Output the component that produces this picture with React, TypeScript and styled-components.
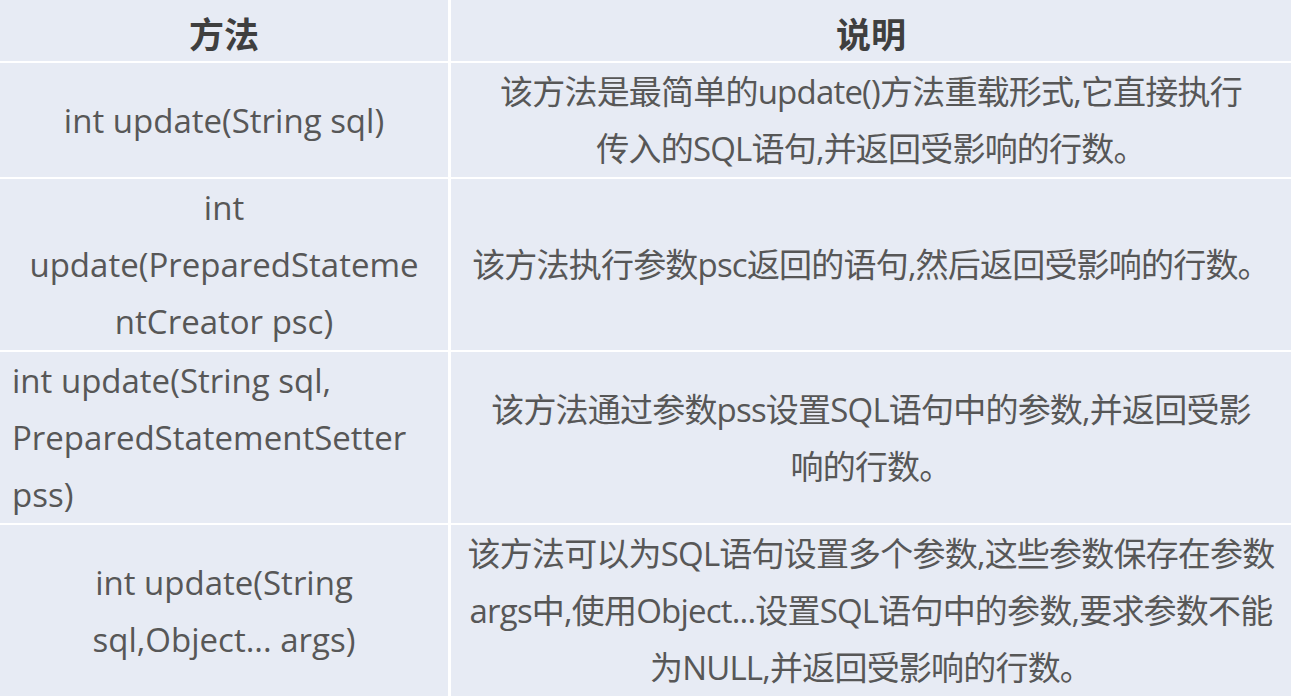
import React from 'react'
import styled, { createGlobalStyle } from 'styled-components'

const GlobalStyle = createGlobalStyle`
  html, body {
    margin: 0;
    padding: 0;
    background: #fff;
  }
  body {
    font-family: "Open Sans", "Noto Sans CJK SC", sans-serif;
  }
`

const Table = styled.div`
  display: grid;
  grid-template-columns: 448px 1fr;
  gap: 2px 3px;
  width: 1291px;
  background: #fff;
`

const HeadCell = styled.div`
  background: #e7ebf4;
  height: 61px;
  display: flex;
  align-items: center;
  justify-content: center;
  padding-top: 3px;
  box-sizing: border-box;
  font-family: "Noto Sans CJK SC", sans-serif;
  font-weight: 700;
  font-size: 35px;
  color: #3f3f3f;
`

const Cell = styled.div<{ $align?: 'left' | 'center'; $rows: number; $tight?: boolean }>`
  background: #e7ebf4;
  height: ${p => p.$rows * 57}px;
  display: flex;
  flex-direction: column;
  justify-content: center;
  align-items: ${p => (p.$align === 'left' ? 'flex-start' : 'center')};
  padding: 0 ${p => (p.$align === 'left' ? '12px' : '0')};
  box-sizing: border-box;
  font-size: 33px;
  letter-spacing: ${p => (p.$tight ? '-0.8px' : '0')};
  line-height: 57px;
  color: #575757;
  white-space: nowrap;
`

type Row = {
  method: string[]
  desc: string[]
  rows: number
  align?: 'left' | 'center'
}

const rows: Row[] = [
  {
    method: ['int update(String sql)'],
    desc: ['该方法是最简单的update()方法重载形式,它直接执行', '传入的SQL语句,并返回受影响的行数。'],
    rows: 2,
  },
  {
    method: ['int', 'update(PreparedStateme', 'ntCreator psc)'],
    desc: ['该方法执行参数psc返回的语句,然后返回受影响的行数。'],
    rows: 3,
  },
  {
    method: ['int update(String sql,', 'PreparedStatementSetter', 'pss)'],
    desc: ['该方法通过参数pss设置SQL语句中的参数,并返回受影', '响的行数。'],
    rows: 3,
    align: 'left',
  },
  {
    method: ['int update(String', 'sql,Object... args)'],
    desc: [
      '该方法可以为SQL语句设置多个参数,这些参数保存在参数',
      'args中,使用Object...设置SQL语句中的参数,要求参数不能',
      '为NULL,并返回受影响的行数。',
    ],
    rows: 3,
  },
]

const App: React.FC = () => {
  return (
    <>
      <GlobalStyle />
      <Table>
        <HeadCell>方法</HeadCell>
        <HeadCell>说明</HeadCell>
        {rows.map(row => (
          <React.Fragment key={row.method.join(' ')}>
            <Cell $rows={row.rows} $align={row.align}>
              {row.method.map(line => (
                <span key={line}>{line}</span>
              ))}
            </Cell>
            <Cell $rows={row.rows} $tight>
              {row.desc.map(line => (
                <span key={line}>{line}</span>
              ))}
            </Cell>
          </React.Fragment>
        ))}
      </Table>
    </>
  )
}

export default App
